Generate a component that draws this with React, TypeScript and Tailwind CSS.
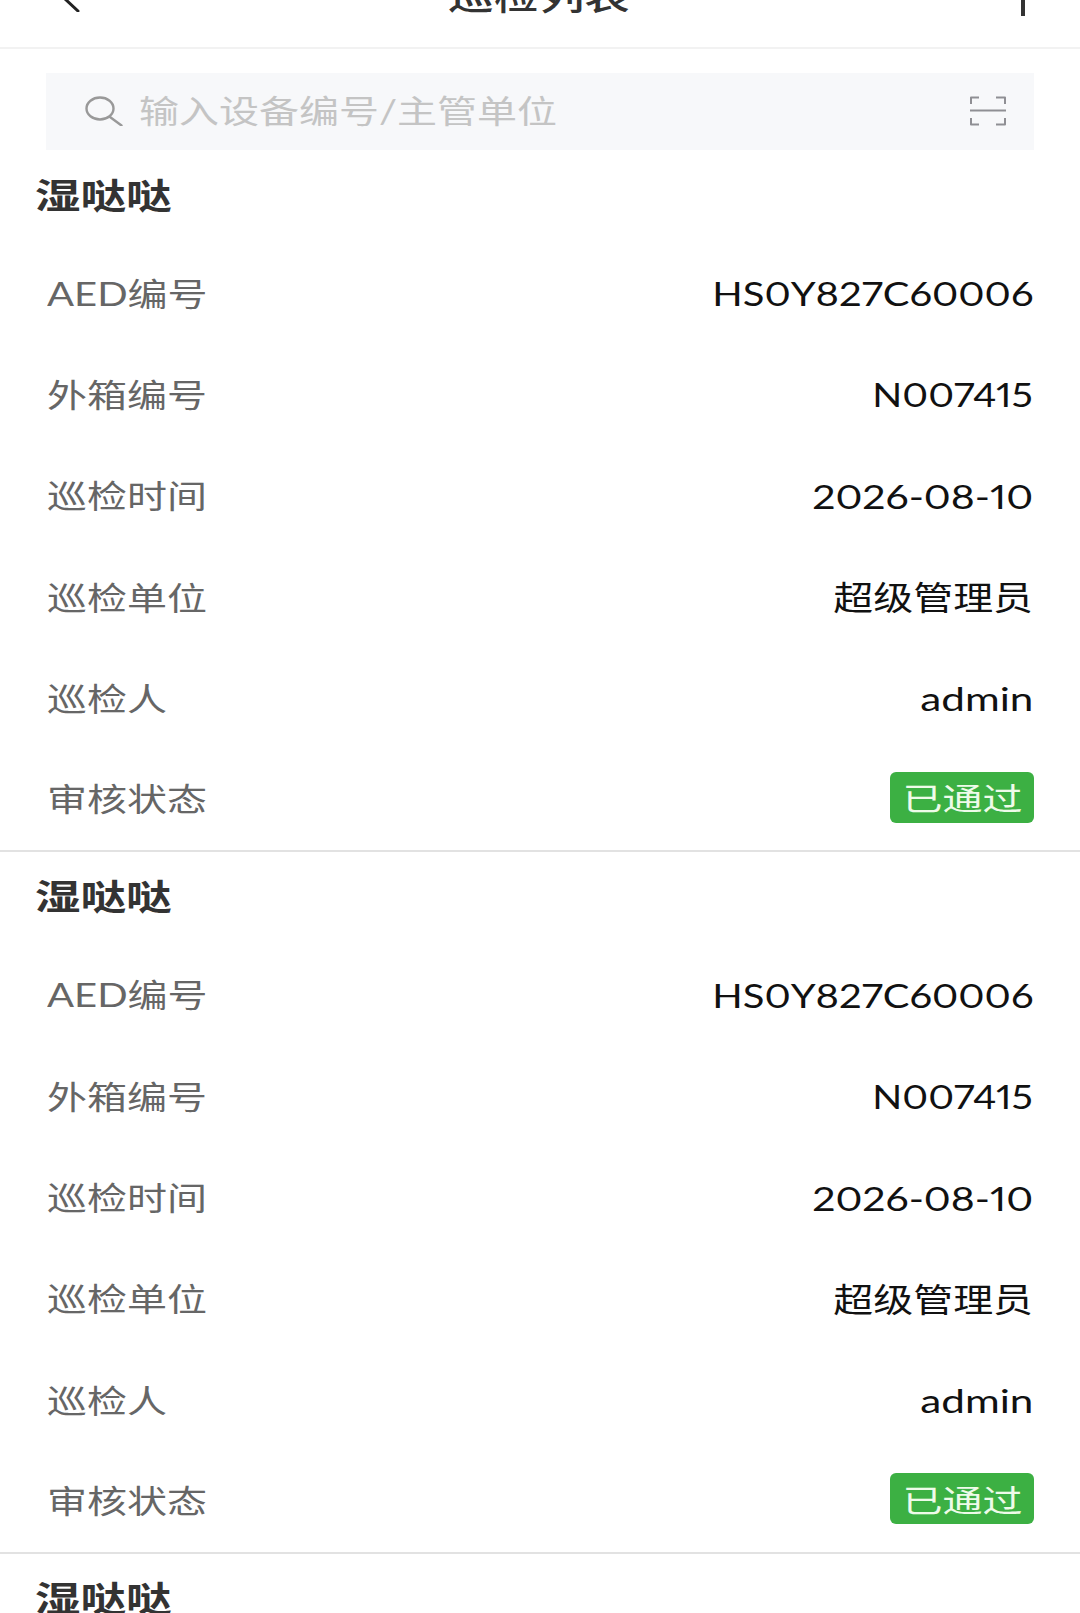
const FONT = "font-['Lato','Noto_Sans_CJK_SC',sans-serif]";

const rows = [
  { label: "AED编号", value: "HS0Y827C60006", scale: "scale-x-[1.21]" },
  { label: "外箱编号", value: "N007415", scale: "scale-x-[1.19]" },
  { label: "巡检时间", value: "2026-08-10", scale: "scale-x-[1.24]" },
  { label: "巡检单位", value: "超级管理员", scale: "scale-x-[1.21]" },
  { label: "巡检人", value: "admin", scale: "scale-x-[1.28]" },
];

function SearchIcon() {
  return (
    <svg width="38" height="30" viewBox="0 0 38 30" fill="none" stroke="#999" strokeWidth="2.4">
      <ellipse cx="15" cy="12.5" rx="13.5" ry="11" />
      <path d="M25 21L36.5 29.5" strokeLinecap="round" />
    </svg>
  );
}

function ScanIcon() {
  return (
    <svg width="38" height="30" viewBox="0 0 38 30" fill="none" stroke="#8f8f94" strokeWidth="2">
      <path d="M10 1.5H2V8M27 1.5H36V8M2 22V28.5H10M36 22V28.5H27" strokeLinejoin="round" />
      <path d="M1 14.5H37" />
    </svg>
  );
}

function Card() {
  return (
    <div className="border-b-2 border-[#e2e2e2]">
      <div className="flex h-[92px] items-center pb-[2px] pl-[35px]">
        <span className="inline-block origin-left scale-x-[1.3] text-[35px] leading-none font-semibold text-[#333]">湿哒哒</span>
      </div>
      {rows.map((row) => (
        <div key={row.label} className="flex h-[101.3px] items-center justify-between px-[47px] pt-[2px]">
          <span className="inline-block origin-left scale-x-[1.25] text-[32px] leading-none text-[#666]">{row.label}</span>
          <span className={`inline-block origin-right proportional-nums ${row.scale} text-[33px] leading-none text-[#111]`}>{row.value}</span>
        </div>
      ))}
      <div className="flex h-[101.3px] items-center justify-between pr-[46px] pl-[47px]">
        <span className="inline-block origin-left scale-x-[1.25] text-[32px] leading-none text-[#666]">审核状态</span>
        <div className="mb-[4px] flex h-[51px] w-[144px] items-center justify-center rounded-[6px] bg-[#3cb043] pt-[3px]">
          <span className="inline-block scale-x-[1.29] text-[31px] leading-none text-[#eefbe9]">已通过</span>
        </div>
      </div>
    </div>
  );
}

export default function App() {
  return (
    <div className={`h-[1613px] w-[1080px] overflow-hidden bg-white ${FONT}`}>
      <header className="flex h-[49px] items-start overflow-hidden border-b-2 border-[#f2f2f2]">
        <div className="flex-1 pl-[60px]">
          <svg width="22" height="12" viewBox="0 0 22 12" fill="none" stroke="#222" strokeWidth="3">
            <path d="M4 -2L18 11" strokeLinecap="round" />
          </svg>
        </div>
        <span className="mt-[-22px] mr-[7px] inline-block scale-x-[1.26] text-[36px] leading-none font-medium text-[#333]">巡检列表</span>
        <div className="flex flex-1 justify-end pr-[55px]">
          <div className="h-[16px] w-[4px] bg-[#333]" />
        </div>
      </header>
      <div className="mx-[46px] mt-[24px] flex h-[77px] items-center justify-between bg-[#f7f8fa] pr-[27px] pb-[2px] pl-[39px]">
        <div className="flex items-center gap-[16px]">
          <SearchIcon />
          <span className="inline-block origin-left scale-x-[1.25] text-[32px] leading-none text-[#c4c4c4]">输入设备编号/主管单位</span>
        </div>
        <ScanIcon />
      </div>
      <Card />
      <Card />
      <Card />
    </div>
  );
}
